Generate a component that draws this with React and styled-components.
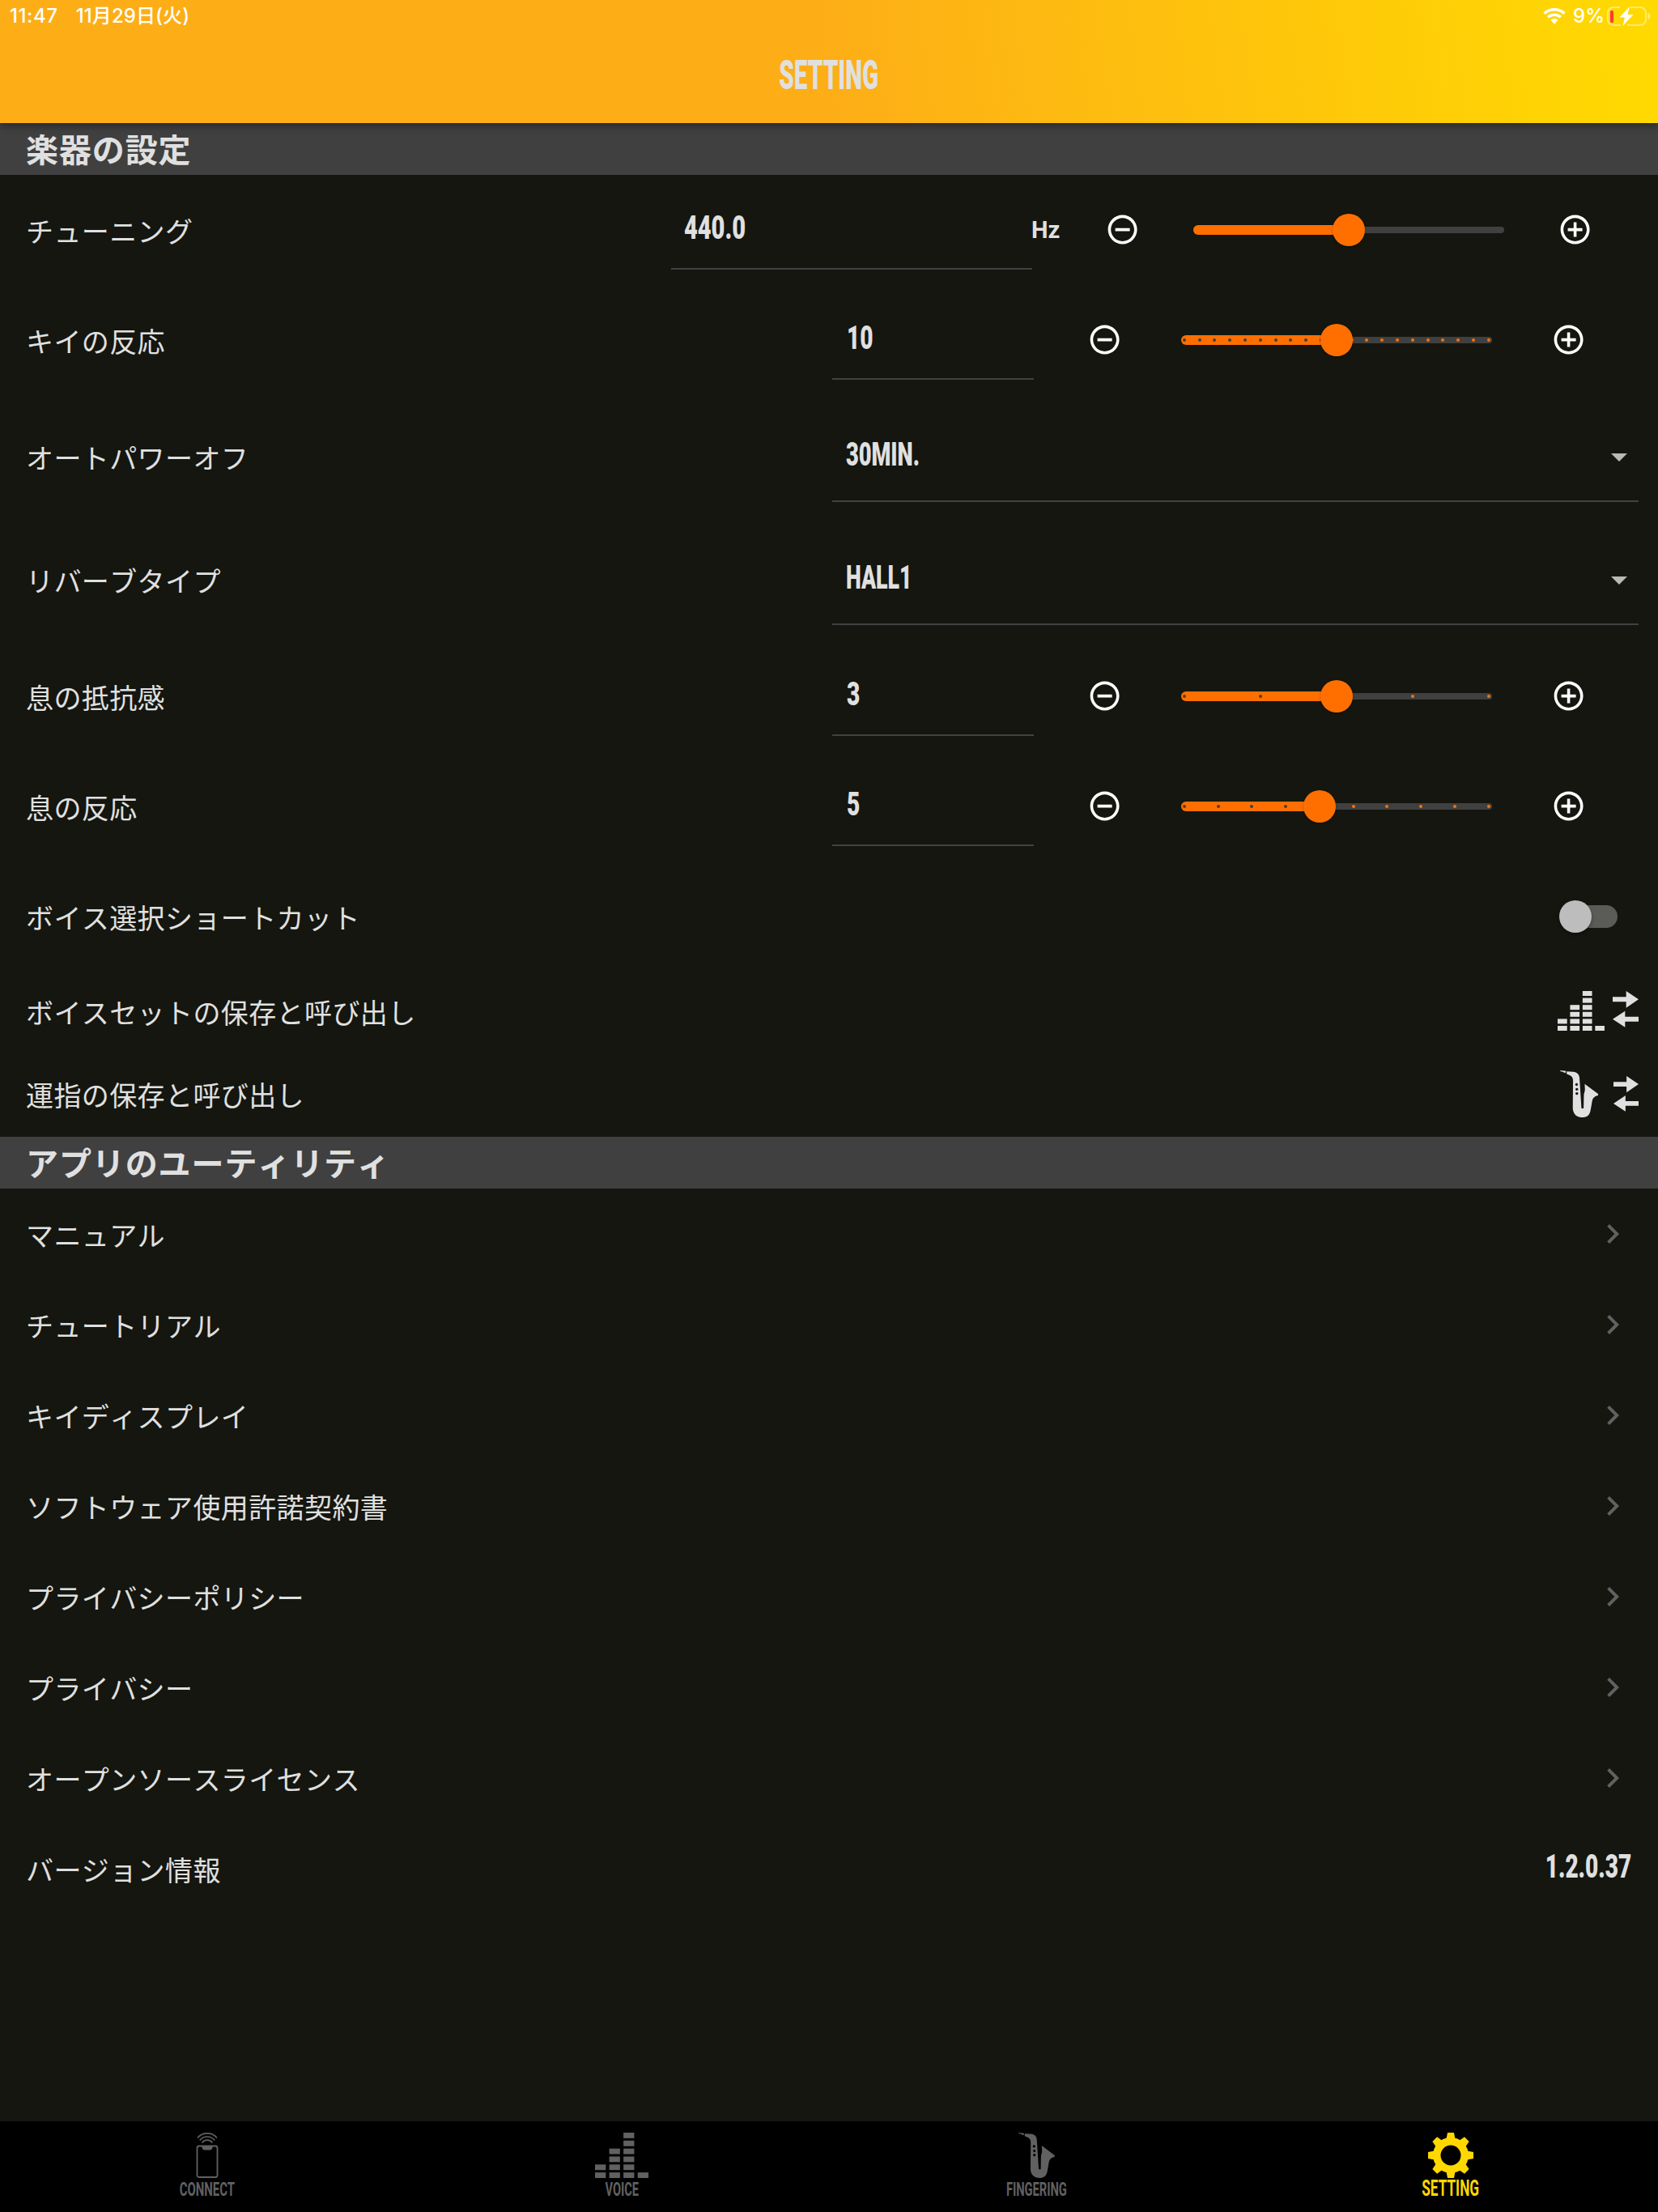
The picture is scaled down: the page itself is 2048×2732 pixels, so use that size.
import React, { useState } from "react";
import styled, { createGlobalStyle } from "styled-components";
import {
  MdAddCircleOutline,
  MdArrowDropDown,
  MdChevronRight,
  MdRemoveCircleOutline,
} from "react-icons/md";

const links = [
  "マニュアル",
  "チュートリアル",
  "キイディスプレイ",
  "ソフトウェア使用許諾契約書",
  "プライバシーポリシー",
  "プライバシー",
  "オープンソースライセンス",
];

const WifiIcon = () => (
  <svg width="28" height="20" viewBox="0 0 28 20" fill="#fff">
    <path d="M14 0C8.7 0 3.900 2 .3 5.400L2.800 8C5.800 5.200 9.700 3.600 14 3.600S22.200 5.200 25.200 8L27.700 5.400C24.100 2 19.300 0 14 0Z" />
    <path d="M14 6.500C10.500 6.500 7.300 7.800 4.900 10L7.500 12.600C9.200 11 11.500 10.100 14 10.100S18.800 11 20.500 12.600L23.100 10C20.700 7.800 17.500 6.500 14 6.500Z" />
    <path d="M14 13C12.200 13 10.600 13.600 9.400 14.700L14 19.800L18.600 14.700C17.400 13.600 15.800 13 14 13Z" />
  </svg>
);

const BatteryIcon = () => (
  <svg width="54" height="24" viewBox="0 0 54 24">
    <path
      d="M16 1H8a7 7 0 0 0-7 7v8a7 7 0 0 0 7 7h9M25 23h16a7 7 0 0 0 7-7V8a7 7 0 0 0-7-7H29"
      fill="none"
      stroke="#fff"
      strokeOpacity="0.45"
      strokeWidth="2"
    />
    <path d="M50.500 8C52.500 8.500 53.500 10 53.500 12S52.500 15.500 50.500 16Z" fill="#fff" fillOpacity="0.5" />
    <rect x="4" y="5" width="4" height="15" rx="1.500" fill="#ff3b30" />
    <path d="M28 0L15.500 13.500H22L19.500 24L32.500 10H25.500Z" fill="#fff" />
  </svg>
);

const EqualizerIcon = ({ width, height }) => (
  <svg width={width} height={height} viewBox="0 0 174 147" preserveAspectRatio="none" fill="currentColor">
    {[2, 4, 6, 1].map((count, col) =>
      Array.from({ length: count }, (_, i) => (
        <rect key={`${col}-${i}`} x={col * 46.3} y={129 - i * 25.8} width="35" height="18" />
      ))
    )}
  </svg>
);

const SaxIcon = ({ width, height }) => (
  <svg width={width} height={height} viewBox="0 0 142 174" preserveAspectRatio="none" fill="currentColor">
    <path d="M0 0L22 2L20 10L12 7L10 5L2 4Z" />
    <path
      fillRule="evenodd"
      d="M25 4L48 5C63 6 72 15 72 30L79 140Q83 142 87 140L88 92C88 84 92 80 92 70L91 50L142 88L140 93C128 95 121 102 119 112L113 146C110 166 99 174 82 174C62 174 48 162 47 140L48 38C48 26 42 20 34 17L24 13Z
      M61 47.500a5 5 0 1 0 .1 0ZM62 65a5 5 0 1 0 .1 0ZM62 81a5 5 0 1 0 .1 0Z"
    />
  </svg>
);

const SwapIcon = ({ width, height }) => (
  <svg width={width} height={height} viewBox="0 0 96 135" preserveAspectRatio="none" fill="currentColor">
    <path d="M0 22H50V0L96 31L50 62V40H0Z" />
    <path d="M96 95H46V74L0 104L46 134V113H96Z" />
  </svg>
);

const PhoneIcon = () => (
  <svg width="30" height="56" viewBox="0 0 30 56" fill="none" stroke="currentColor">
    <rect x="2.500" y="16.500" width="25" height="38.500" rx="2.500" strokeWidth="1.800" />
    <path d="M8.500 17H21.500V18C21.500 20 20 21.500 18 21.500H12C10 21.500 8.500 20 8.500 18Z" fill="currentColor" stroke="none" />
    <path d="M3 6.500C9 -1 21 -1 27 6.500M5.800 9.500C10.500 3.500 19.500 3.500 24.200 9.500M8.500 12.500C12 8 18 8 21.500 12.500" strokeWidth="1.700" />
  </svg>
);

const GearIcon = () => (
  <svg width="56" height="56" viewBox="0 0 56 56" fill="currentColor">
    <circle cx="28" cy="28" r="17.200" fill="none" stroke="currentColor" strokeWidth="9.400" />
    {[0, 45, 90, 135, 180, 225, 270, 315].map((deg) => (
      <path key={deg} d="M22.500 8L24 0H32L33.500 8Z" transform={`rotate(${deg} 28 28)`} />
    ))}
  </svg>
);

const Slider = ({ index, steps, ticks }) => {
  const percent = (index / steps) * 100;
  return (
    <Track>
      <TrackRest />
      <Rail>
        <TrackFill style={{ width: `calc(${percent}% + 4px)` }} />
        {ticks &&
          Array.from({ length: steps + 1 }, (_, i) => (
            <Tick key={i} $active={i <= index} style={{ left: `${(i / steps) * 100}%` }} />
          ))}
        <Thumb style={{ left: `${percent}%` }} />
      </Rail>
    </Track>
  );
};

const Stepper = ({ label, min, max, start, unit, decimals = 0, squeeze }) => {
  const [value, setValue] = useState(start);
  return (
    <Row $columns={unit ? "797px 446px 40px 1fr" : "996px 249px 1fr"}>
      <Label>{label}</Label>
      <Field $indent={unit ? 16 : 18}>
        <Condensed $squeeze={squeeze}>{value.toFixed(decimals)}</Condensed>
      </Field>
      {unit && <Unit>{unit}</Unit>}
      <Controls $wide={!!unit}>
        <RoundButton onClick={() => setValue(Math.max(min, value - 1))}>
          <MdRemoveCircleOutline />
        </RoundButton>
        <Slider index={value - min} steps={max - min} ticks={!unit} />
        <RoundButton onClick={() => setValue(Math.min(max, value + 1))}>
          <MdAddCircleOutline />
        </RoundButton>
      </Controls>
    </Row>
  );
};

const Select = ({ label, value, squeeze }) => (
  <Row $height={152} $columns="996px 996px">
    <Label>{label}</Label>
    <SelectField>
      <Condensed $squeeze={squeeze}>{value}</Condensed>
      <MdArrowDropDown />
    </SelectField>
  </Row>
);

const App = () => {
  return (
    <Screen>
      <GlobalStyle />
      <Header>
        <StatusBar>
          <StatusTime>11:47</StatusTime>
          <StatusDate>11月29日(火)</StatusDate>
          <StatusRight>
            <WifiIcon />
            <Battery>9%</Battery>
            <BatteryIcon />
          </StatusRight>
        </StatusBar>
        <Title>
          <Condensed $size={50} $squeeze={0.592} $origin="center">SETTING</Condensed>
        </Title>
      </Header>

      <SectionTitle>楽器の設定</SectionTitle>
      <Stepper label="チューニング" unit="Hz" min={430} max={450} start={440} decimals={1} squeeze={0.725} />
      <Stepper label="キイの反応" min={0} max={20} start={10} squeeze={0.7} />
      <Select label="オートパワーオフ" value="30MIN." squeeze={0.68} />
      <Select label="リバーブタイプ" value="HALL1" squeeze={0.665} />
      <Stepper label="息の抵抗感" min={1} max={5} start={3} squeeze={0.7} />
      <Stepper label="息の反応" min={1} max={10} start={5} squeeze={0.7} />
      <FlexRow $height={136} $right={50}>
        <Label>ボイス選択ショートカット</Label>
        <Switch>
          <SwitchThumb />
        </Switch>
      </FlexRow>
      <FlexRow $height={102} $right={24} $bottom={5}>
        <Label>ボイスセットの保存と呼び出し</Label>
        <IconPair $gap={10} $lift={4}>
          <EqualizerIcon width={58} height={49} />
          <SwapIcon width={32} height={45} />
        </IconPair>
      </FlexRow>
      <FlexRow $height={102} $right={24} $bottom={4}>
        <Label>運指の保存と呼び出し</Label>
        <IconPair $gap={19}>
          <SaxIcon width={47.5} height={58} />
          <SwapIcon width={31} height={44} />
        </IconPair>
      </FlexRow>

      <SectionTitle>アプリのユーティリティ</SectionTitle>
      {links.map((text) => (
        <FlexRow key={text} $height={112} $right={32}>
          <Label>{text}</Label>
          <Chevron />
        </FlexRow>
      ))}
      <FlexRow $height={112} $right={33}>
        <Label>バージョン情報</Label>
        <Version>
          <Condensed $squeeze={0.7} $origin="right">1.2.0.37</Condensed>
        </Version>
      </FlexRow>

      <BottomNav>
        <NavItem>
          <PhoneIcon />
          <NavText><Condensed $size={24} $weight={700} $squeeze={0.62} $origin="center">CONNECT</Condensed></NavText>
        </NavItem>
        <NavItem>
          <EqualizerIcon width={66} height={56} />
          <NavText><Condensed $size={24} $weight={700} $squeeze={0.605} $origin="center">VOICE</Condensed></NavText>
        </NavItem>
        <NavItem>
          <SaxIcon width={45} height={56} />
          <NavText><Condensed $size={24} $weight={700} $squeeze={0.61} $origin="center">FINGERING</Condensed></NavText>
        </NavItem>
        <NavItem $active>
          <GearIcon />
          <NavText $active><Condensed $size={28} $weight={700} $squeeze={0.615} $origin="center">SETTING</Condensed></NavText>
        </NavItem>
      </BottomNav>
    </Screen>
  );
};

const GlobalStyle = createGlobalStyle`
  body {
    margin: 0;
    background: #14160f;
  }
  * {
    box-sizing: border-box;
  }
  svg {
    display: block;
    flex: none;
  }
`;

const Screen = styled.div`
  display: flex;
  flex-direction: column;
  width: 2048px;
  height: 2732px;
  overflow: hidden;
  background: #14160f;
  color: #e0e0e0;
  font-family: "Noto Sans CJK JP", sans-serif;
`;

const Header = styled.header`
  position: relative;
  z-index: 1;
  height: 152px;
  flex: none;
  background: linear-gradient(82deg, #fdae17 50%, #ffda00 100%);
  box-shadow: 0 4px 9px rgba(0, 0, 0, 0.35);
`;

const StatusBar = styled.div`
  display: flex;
  align-items: center;
  height: 40px;
  padding: 0 9px 0 12px;
  color: #fff;
  font: 500 24px/40px Inter, "Noto Sans CJK JP", sans-serif;
`;

const StatusTime = styled.span`
  letter-spacing: 0.6px;
`;

const StatusDate = styled.span`
  margin-left: 22px;
  letter-spacing: 0.1px;
`;

const StatusRight = styled.div`
  display: flex;
  align-items: center;
  margin-left: auto;
`;

const Battery = styled.span`
  margin: 0 3px 0 9px;
`;

const Title = styled.h1`
  display: flex;
  justify-content: center;
  align-items: center;
  height: 105px;
  margin: 0;
`;

const Condensed = styled.span`
  display: inline-block;
  font-family: Roboto, sans-serif;
  font-size: ${(p) => p.$size || 40}px;
  font-weight: ${(p) => p.$weight || 900};
  line-height: 1.2;
  white-space: nowrap;
  transform: scaleX(${(p) => p.$squeeze});
  transform-origin: ${(p) => p.$origin || "left"};
`;

const SectionTitle = styled.h2`
  display: flex;
  align-items: center;
  flex: none;
  height: 64px;
  margin: 0;
  padding: 0 0 3px 32px;
  background: #404040;
  font-size: 40px;
  font-weight: 700;
  font-kerning: none;
  line-height: 60px;
  letter-spacing: 0.9px;
`;

const Row = styled.div`
  display: grid;
  grid-template-columns: ${(p) => p.$columns};
  align-items: center;
  flex: none;
  height: ${(p) => p.$height || 136}px;
  padding-left: 32px;
`;

const FlexRow = styled.div`
  display: flex;
  align-items: center;
  justify-content: space-between;
  flex: none;
  height: ${(p) => p.$height}px;
  padding: 0 ${(p) => p.$right}px ${(p) => p.$bottom || 0}px 32px;
`;

const Label = styled.div`
  padding-top: 2px;
  font-size: 34px;
  font-kerning: none;
  line-height: 48px;
  letter-spacing: 0.4px;
  white-space: nowrap;
`;

const Field = styled.div`
  display: flex;
  align-items: center;
  align-self: start;
  height: 117px;
  padding: 16px 0 0 ${(p) => p.$indent}px;
  border-bottom: 2px solid #424242;
`;

const SelectField = styled.div`
  display: flex;
  align-items: center;
  justify-content: space-between;
  align-self: start;
  height: 132px;
  padding: 17px 0 0 17px;
  border-bottom: 2px solid #424242;

  svg {
    width: 48px;
    height: 48px;
    margin-top: 5px;
    color: #b9b9b7;
  }
`;

const Controls = styled.div`
  display: flex;
  align-items: center;
  justify-content: flex-end;
  gap: ${(p) => (p.$wide ? 66 : 73)}px;
  padding-right: ${(p) => (p.$wide ? 81 : 89)}px;
`;

const Unit = styled.span`
  font-family: Roboto, sans-serif;
  font-size: 29px;
  font-weight: 700;
  line-height: 40px;
  margin-left: -1px;
`;

const RoundButton = styled.button`
  display: flex;
  padding: 0;
  border: 0;
  background: none;
  color: #fff;
  cursor: pointer;

  svg {
    width: 43.2px;
    height: 43.2px;
  }
`;

const Track = styled.div`
  position: relative;
  display: flex;
  align-items: center;
  width: 384px;
  height: 40px;
`;

const TrackRest = styled.div`
  flex: 1;
  height: 8px;
  border-radius: 4px;
  background: #404040;
`;

/* marks and thumb sit 4px inside the ends of the track */
const Rail = styled.div`
  position: absolute;
  left: 4px;
  right: 4px;
  top: 0;
  bottom: 0;
`;

const TrackFill = styled.div`
  position: absolute;
  left: -4px;
  top: 14px;
  height: 12px;
  border-radius: 6px 0 0 6px;
  background: #ff6f00;
`;

const Tick = styled.div`
  position: absolute;
  top: 18px;
  width: 4px;
  height: 4px;
  margin-left: -2px;
  border-radius: 50%;
  background: ${(p) => (p.$active ? "#404040" : "#ff6f00")};
`;

const Thumb = styled.div`
  position: absolute;
  top: 0;
  width: 40px;
  height: 40px;
  margin-left: -20px;
  border-radius: 50%;
  background: #ff6f00;
  box-shadow: 0 1px 3px rgba(0, 0, 0, 0.3);
`;

const Switch = styled.div`
  display: flex;
  align-items: center;
  width: 66px;
  height: 28px;
  border-radius: 14px;
  background: #5b5c57;
`;

const SwitchThumb = styled.div`
  width: 40px;
  height: 40px;
  margin-left: -6px;
  border-radius: 50%;
  background: #bdbdbd;
  box-shadow: 0 2px 4px rgba(0, 0, 0, 0.35);
`;

const IconPair = styled.div`
  display: flex;
  align-items: center;
  gap: ${(p) => p.$gap}px;

  svg:last-child {
    margin-bottom: ${(p) => p.$lift || 0}px;
  }
`;

const Chevron = styled(MdChevronRight)`
  width: 48px;
  height: 48px;
  color: #616161;
`;

const Version = styled.div`
  display: flex;
  padding-bottom: 5px;
`;

const BottomNav = styled.nav`
  display: grid;
  grid-template-columns: repeat(4, 1fr);
  height: 112px;
  margin-top: auto;
  background: #000;
`;

const NavItem = styled.div`
  display: flex;
  flex-direction: column;
  align-items: center;
  padding-top: 14px;
  color: ${(p) => (p.$active ? "#ffd800" : "#616161")};
`;

const NavText = styled.div`
  display: flex;
  align-items: center;
  height: 30px;
  margin-top: ${(p) => (p.$active ? -2 : -1)}px;
`;

export default App;
